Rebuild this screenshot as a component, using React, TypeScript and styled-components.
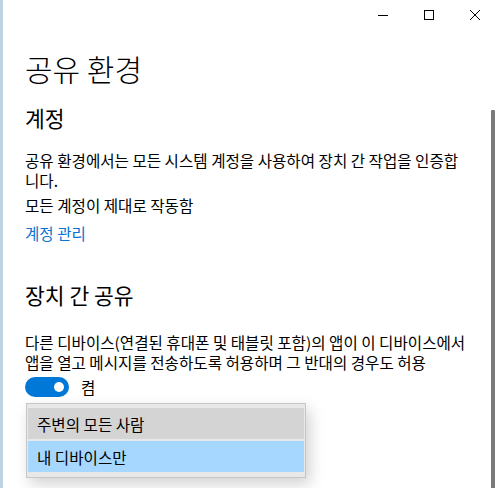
import React from "react";
import styled, { createGlobalStyle } from "styled-components";

const GlobalStyle = createGlobalStyle`
  html, body {
    margin: 0;
    padding: 0;
    background: #ffffff;
    overflow: hidden;
  }
  body {
    font-family: "Noto Sans CJK KR", "Noto Sans", sans-serif;
    color: #000000;
  }
`;

const Window = styled.div`
  width: 495px;
  height: 488px;
  box-sizing: border-box;
  border-left: 3px solid #bdd3df;
  display: flex;
  flex-direction: column;
  background: #ffffff;
  overflow: hidden;
`;

const TitleBar = styled.div`
  height: 32px;
  display: flex;
  justify-content: flex-end;
  margin-right: -3px;
  flex-shrink: 0;
`;

const ControlButton = styled.div`
  width: 46px;
  height: 30px;
  display: flex;
  align-items: center;
  justify-content: center;
  color: #000;
`;

const Body = styled.div`
  flex: 1;
  display: flex;
  min-height: 0;
`;

const Content = styled.div`
  flex: 1;
  padding: 0 0 0 22px;
`;

const ScrollTrack = styled.div`
  width: 4px;
  display: flex;
  justify-content: flex-start;
  padding-top: 78px;
  flex-shrink: 0;
`;

const ScrollThumb = styled.div`
  width: 2px;
  flex: 1;
  background: #7a7a7a;
  border-radius: 1px 1px 0 0;
`;

const PageTitle = styled.h1`
  margin: 18px 0 0 0;
  font-size: 30px;
  line-height: 36px;
  font-weight: 300;
`;

const SectionTitle = styled.h2<{ $top: number }>`
  margin: ${(p) => p.$top}px 0 0 0;
  font-size: 21.5px;
  line-height: 26px;
  font-weight: 400;
`;

const Paragraph = styled.p<{ $top: number }>`
  margin: ${(p) => p.$top}px 0 0 0;
  font-size: 15.6px;
  line-height: 20px;
  white-space: nowrap;
`;

const Link = styled.a`
  display: block;
  margin: 8px 0 0 0;
  font-size: 15.6px;
  line-height: 20px;
  color: #0a74d0;
  text-decoration: none;
`;

const ToggleRow = styled.div`
  display: flex;
  align-items: center;
  gap: 12px;
  margin: 5px 0 0 0;
  height: 20px;
`;

const Toggle = styled.div<{ $on: boolean }>`
  width: 44px;
  height: 20px;
  box-sizing: border-box;
  border-radius: 10px;
  background: ${(p) => (p.$on ? "#0078d7" : "#ffffff")};
  display: flex;
  align-items: center;
  justify-content: ${(p) => (p.$on ? "flex-end" : "flex-start")};
  padding: 0 5px;
`;

const Knob = styled.div`
  width: 10px;
  height: 10px;
  border-radius: 50%;
  background: #ffffff;
`;

const ToggleLabel = styled.span`
  font-size: 15.6px;
  line-height: 20px;
`;

const MenuAnchor = styled.div`
  position: relative;
`;

const Menu = styled.div`
  position: absolute;
  left: 1px;
  top: 6px;
  width: 280px;
  box-sizing: border-box;
  background: #e8e8e8;
  border: 1px solid #c6c6c6;
  padding: 4px 1px 5px 1px;
  display: flex;
  flex-direction: column;
  gap: 2px;
  box-shadow: 4px 6px 14px rgba(0, 0, 0, 0.18);
`;

const MenuItem = styled.div<{ $variant: "hover" | "selected" }>`
  height: 31px;
  display: flex;
  align-items: center;
  padding: 0 9px;
  font-size: 15.6px;
  background: ${(p) => (p.$variant === "selected" ? "#a6d8ff" : "#d4d4d4")};
`;

const MinimizeIcon = () => (
  <svg width="10" height="10" viewBox="0 0 10 10">
    <rect x="0" y="5" width="10" height="1" fill="#000" />
  </svg>
);

const MaximizeIcon = () => (
  <svg width="10" height="10" viewBox="0 0 10 10">
    <rect x="0.5" y="0.5" width="9" height="9" fill="none" stroke="#000" strokeWidth="1" />
  </svg>
);

const CloseIcon = () => (
  <svg width="10" height="10" viewBox="0 0 10 10">
    <path d="M0 0 L10 10 M10 0 L0 10" stroke="#000" strokeWidth="1" />
  </svg>
);

export default function App() {
  return (
    <>
      <GlobalStyle />
      <Window>
        <TitleBar>
          <ControlButton>
            <MinimizeIcon />
          </ControlButton>
          <ControlButton>
            <MaximizeIcon />
          </ControlButton>
          <ControlButton>
            <CloseIcon />
          </ControlButton>
        </TitleBar>
        <Body>
          <Content>
            <PageTitle>공유 환경</PageTitle>
            <SectionTitle $top={19}>계정</SectionTitle>
            <Paragraph $top={19}>
              공유 환경에서는 모든 시스템 계정을 사용하여 장치 간 작업을 인증합
              <br />
              니다.
            </Paragraph>
            <Paragraph $top={5}>모든 계정이 제대로 작동함</Paragraph>
            <Link>계정 관리</Link>
            <SectionTitle $top={39}>장치 간 공유</SectionTitle>
            <Paragraph $top={24}>
              다른 디바이스(연결된 휴대폰 및 태블릿 포함)의 앱이 이 디바이스에서
              <br />
              앱을 열고 메시지를 전송하도록 허용하며 그 반대의 경우도 허용
            </Paragraph>
            <ToggleRow>
              <Toggle $on>
                <Knob />
              </Toggle>
              <ToggleLabel>켬</ToggleLabel>
            </ToggleRow>
            <MenuAnchor>
              <Menu>
                <MenuItem $variant="hover">주변의 모든 사람</MenuItem>
                <MenuItem $variant="selected">내 디바이스만</MenuItem>
              </Menu>
            </MenuAnchor>
          </Content>
          <ScrollTrack>
            <ScrollThumb />
          </ScrollTrack>
        </Body>
      </Window>
    </>
  );
}
